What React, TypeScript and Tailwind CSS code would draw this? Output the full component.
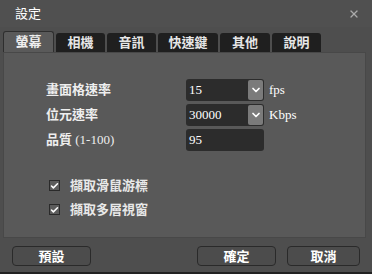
import { ChevronDown, X, Check } from 'lucide-react';

const font = { fontFamily: '"Liberation Serif", "Noto Sans CJK TC", serif' };

const tabs = ['螢幕', '相機', '音訊', '快速鍵', '其他', '說明'];
const tabWidths = ['w-[51px]', 'w-[49px]', 'w-[49px]', 'w-[60px]', 'w-[50px]', 'w-[49px]'];

function SelectBox({ value }: { value: string }) {
  return (
    <div className="flex items-center justify-between w-[78px] h-[22px] bg-[#2c2c2c] rounded-[3px] pl-[3px] pr-[1px]">
      <span className="text-[13px] text-white">{value}</span>
      <span className="flex items-center justify-center w-[15px] h-[20px] bg-[#7b7b7b] rounded-[2px]">
        <ChevronDown className="w-[12px] h-[12px] text-white" strokeWidth={3.5} />
      </span>
    </div>
  );
}

function CheckRow({ label }: { label: string }) {
  return (
    <div className="flex items-center gap-[10px] h-[13px]">
      <span className="flex items-center justify-center w-[11px] h-[11px] border border-[#2a2a2a] bg-[#5c5c5c]">
        <Check className="w-[10px] h-[10px] text-white" strokeWidth={4} />
      </span>
      <span className="text-[13px] text-[#e8e8e8] font-bold">{label}</span>
    </div>
  );
}

export default function App() {
  return (
    <div className="w-[372px] h-[274px] bg-[#4e4e4e] flex flex-col border-b-2 border-[#222]" style={font}>
      <div className="h-[27px] flex items-center justify-between pl-[15px] pr-[12px] bg-[#505050]">
        <span className="text-[13px] text-white">設定</span>
        <X className="w-[12px] h-[12px] text-[#aaaaaa]" strokeWidth={2.5} />
      </div>

      <div className="flex items-end gap-[2px] pl-[3px] h-[25px]">
        {tabs.map((t, i) => (
          <div
            key={t}
            className={`${tabWidths[i]} flex items-center justify-center text-[13px] font-bold rounded-t-[3px] ${
              i === 0
                ? 'h-[21px] bg-[#5a5a5a] text-[#eeeeee] border border-b-0 border-[#2e2e2e]'
                : 'h-[19px] bg-[#1f1f1f] text-[#e6e6e6]'
            }`}
          >
            {t}
          </div>
        ))}
      </div>

      <div className="mx-[3px] w-[363px] h-[186px] bg-[#595959] border border-[#484848] pt-[26px] pl-[42px]">
        <div className="flex flex-col gap-[3px]">
          {[
            { label: '畫面格速率', extra: '', value: '15', unit: 'fps', select: true },
            { label: '位元速率', extra: '', value: '30000', unit: 'Kbps', select: true },
            { label: '品質', extra: ' (1-100)', value: '95', unit: '', select: false },
          ].map((r) => (
            <div key={r.label} className="flex items-center h-[22px]">
              <span className="w-[140px] text-[13px] text-[#eeeeee] font-bold whitespace-pre">
                {r.label}
                <span className="font-normal">{r.extra}</span>
              </span>
              {r.select ? (
                <SelectBox value={r.value} />
              ) : (
                <div className="w-[78px] h-[22px] bg-[#2c2c2c] rounded-[3px] pl-[3px] flex items-center text-[13px] text-white">
                  {r.value}
                </div>
              )}
              <span className="ml-[5px] text-[13px] text-white">{r.unit}</span>
            </div>
          ))}
        </div>

        <div className="flex flex-col gap-[11px] mt-[28px] pl-[3px]">
          <CheckRow label="擷取滑鼠游標" />
          <CheckRow label="擷取多層視窗" />
        </div>
      </div>

      <div className="flex items-center h-[32px] pt-[3px] px-[12px]">
        <button className="w-[79px] h-[20px] rounded-[4px] bg-[#4c4c4c] border border-[#2a2a2a] text-[13px] text-white font-bold">
          預設
        </button>
        <button className="ml-auto w-[79px] h-[20px] rounded-[4px] bg-[#4c4c4c] border border-[#2a2a2a] text-[13px] text-white font-bold">
          確定
        </button>
        <button className="ml-[11px] w-[73px] h-[20px] rounded-[4px] bg-[#4c4c4c] border border-[#2a2a2a] text-[13px] text-white font-bold">
          取消
        </button>
      </div>
    </div>
  );
}
